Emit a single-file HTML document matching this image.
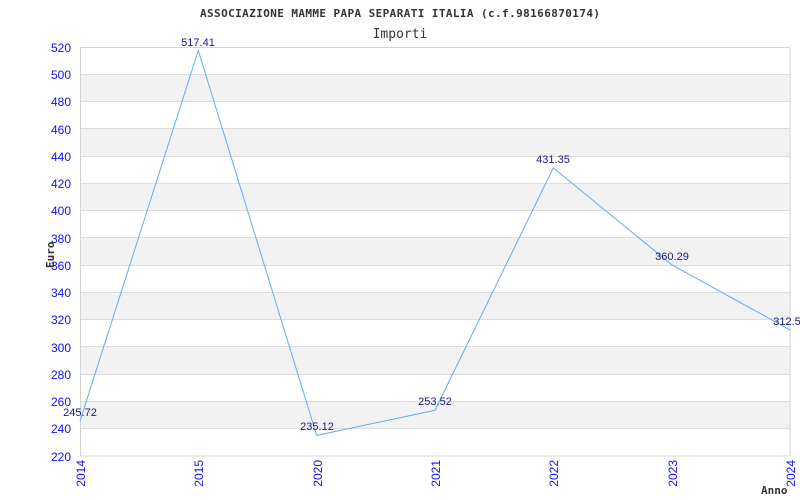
<!DOCTYPE html>
<html><head><style>body{margin:0;background:#fff}svg{display:block}</style></head><body>
<svg width="800" height="500" xmlns="http://www.w3.org/2000/svg" font-family="Liberation Sans, sans-serif">
<rect width="800" height="500" fill="#fff"/>
<g fill="#f2f2f2">
<rect x="80" y="74.3" width="710" height="27.3"/>
<rect x="80" y="128.8" width="710" height="27.3"/>
<rect x="80" y="183.3" width="710" height="27.3"/>
<rect x="80" y="237.9" width="710" height="27.3"/>
<rect x="80" y="292.4" width="710" height="27.3"/>
<rect x="80" y="346.9" width="710" height="27.3"/>
<rect x="80" y="401.5" width="710" height="27.3"/>
</g>
<g stroke="#dddddd" stroke-width="1">
<line x1="80" y1="74.5" x2="790" y2="74.5"/><line x1="80" y1="101.5" x2="790" y2="101.5"/>
<line x1="80" y1="128.5" x2="790" y2="128.5"/><line x1="80" y1="156.5" x2="790" y2="156.5"/>
<line x1="80" y1="183.5" x2="790" y2="183.5"/><line x1="80" y1="210.5" x2="790" y2="210.5"/>
<line x1="80" y1="237.5" x2="790" y2="237.5"/><line x1="80" y1="265.5" x2="790" y2="265.5"/>
<line x1="80" y1="292.5" x2="790" y2="292.5"/><line x1="80" y1="319.5" x2="790" y2="319.5"/>
<line x1="80" y1="346.5" x2="790" y2="346.5"/><line x1="80" y1="374.5" x2="790" y2="374.5"/>
<line x1="80" y1="401.5" x2="790" y2="401.5"/><line x1="80" y1="428.5" x2="790" y2="428.5"/>
</g>
<rect x="80.5" y="47.5" width="709.5" height="408.5" fill="none" stroke="#d4d4d4"/>
<polyline fill="none" stroke="#66aaee" stroke-width="1" points="80,421 198.3,50.5 316.7,435.4 435,410.3 553.3,167.9 671.7,264.7 790,329.9"/>
<g font-size="12" fill="#1111ee" text-anchor="end">
<text x="71" y="52">520</text><text x="71" y="79">500</text><text x="71" y="106">480</text>
<text x="71" y="134">460</text><text x="71" y="161">440</text><text x="71" y="188">420</text>
<text x="71" y="215">400</text><text x="71" y="243">380</text><text x="71" y="270">360</text>
<text x="71" y="297">340</text><text x="71" y="324">320</text><text x="71" y="352">300</text>
<text x="71" y="379">280</text><text x="71" y="406">260</text><text x="71" y="433">240</text>
<text x="71" y="461">220</text>
</g>
<g font-size="12" fill="#1111ee" text-anchor="end">
<text transform="translate(85,460) rotate(-90)">2014</text>
<text transform="translate(203,460) rotate(-90)">2015</text>
<text transform="translate(322,460) rotate(-90)">2020</text>
<text transform="translate(440,460) rotate(-90)">2021</text>
<text transform="translate(558,460) rotate(-90)">2022</text>
<text transform="translate(677,460) rotate(-90)">2023</text>
<text transform="translate(795,460) rotate(-90)">2024</text>
</g>
<g font-size="11" fill="#1a1a80" text-anchor="middle">
<text x="80" y="416">245.72</text>
<text x="198" y="46">517.41</text>
<text x="317" y="430">235.12</text>
<text x="435" y="405">253.52</text>
<text x="553" y="163">431.35</text>
<text x="672" y="260">360.29</text>
<text x="787" y="325">312.5</text>
</g>
<text x="400" y="17" font-family="DejaVu Sans Mono, Liberation Mono, monospace" font-size="11" font-weight="bold" fill="#333" text-anchor="middle" textLength="400" lengthAdjust="spacing">ASSOCIAZIONE MAMME PAPA SEPARATI ITALIA (c.f.98166870174)</text>
<text x="400" y="38" font-family="DejaVu Sans Mono, Liberation Mono, monospace" font-size="13" fill="#333" text-anchor="middle">Importi</text>
<text transform="translate(54,268) rotate(-90)" font-family="DejaVu Sans Mono, monospace" font-size="11" font-weight="bold" fill="#333">Euro</text>
<text x="761" y="494" font-family="DejaVu Sans Mono, monospace" font-size="11" font-weight="bold" fill="#333">Anno</text>
</svg>
</body></html>
